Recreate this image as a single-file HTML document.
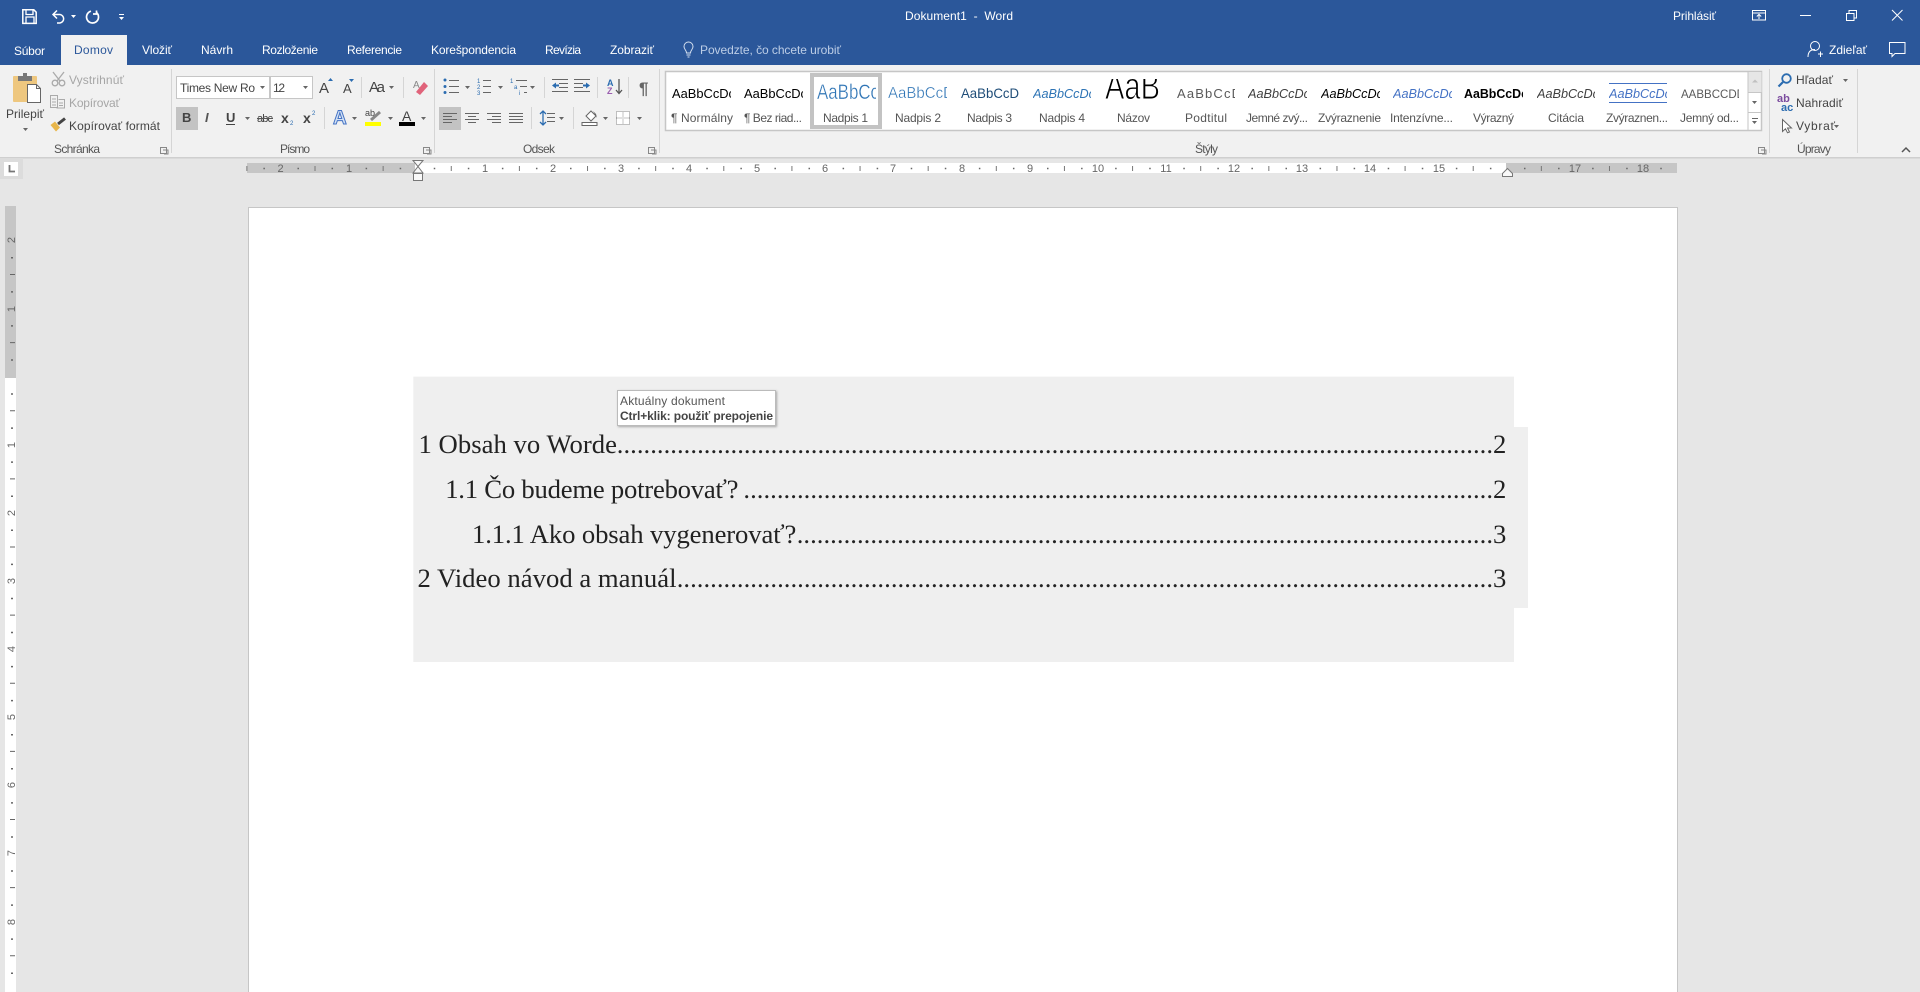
<!DOCTYPE html>
<html lang="sk"><head><meta charset="utf-8"><title>Dokument1 - Word</title>
<style>
html,body{margin:0;padding:0;width:1920px;height:992px;overflow:hidden;background:#e6e6e6}
svg{display:block}
svg text{font-family:"Liberation Sans",sans-serif;font-size:12px;fill:#444;white-space:pre}
.w text,text.w{fill:#fff}
.d{fill:#a6a6a6 !important}
.l{stroke:#666;stroke-width:1;fill:none}
.b{stroke:#2b6cb0;stroke-width:1.4;fill:none}
.r text{font-size:11px;fill:#666;text-anchor:middle}
.s text{font-size:13px;fill:#000}
.toc text{font-family:"Liberation Serif",serif;font-size:26.67px;fill:#222}
.lab text{font-size:12px;fill:#555}
.thin{stroke:#fff;stroke-width:.35px}
</style></head><body>
<svg width="1920" height="992" viewBox="0 0 1920 992" xmlns="http://www.w3.org/2000/svg">
<defs><path id="c" d="M0 0h5l-2.500 3z" fill="#666"/><path id="cw" d="M0 0h5l-2.500 3z" fill="#fff"/>
<g id="dl"><path d="M0.500 0.500h6v6h-6z M3 3h5v4h-4" fill="none" stroke="#888" stroke-width="1"/></g>
<filter id="sh" x="-5%" y="-10%" width="110%" height="125%"><feDropShadow dx="1" dy="1" stdDeviation="1" flood-color="#000" flood-opacity=".3"/></filter></defs>

<!-- top bar -->
<rect width="1920" height="65" fill="#2b579a"/>
<g fill="none" stroke="#fff" stroke-width="1.500">
<path d="M22.800 9.800h11l2.400 2.400v11.200h-13.400z"/><path d="M26 10v4.500h7V10M26 23v-6h8v6" stroke-width="1.300"/>
<path d="M53 14.500h7a4.300 4.300 0 0 1 0 8.500h-3M57 10.500l-4 4 4 4"/>
<path d="M91 11.200a6 6 0 1 0 5.500 1.300M96.500 10.500v3.500h-3.500" stroke-width="1.700"/>
<path d="M119 14.500h5" stroke-width="1"/>
</g>
<use href="#cw" x="71" y="15"/><use href="#cw" x="119" y="17"/>
<g class="w">
<text x="905" y="20" textLength="108">Dokument1  -  Word</text>
<text x="1673" y="20" textLength="43">Prihlásiť</text>
<text x="14" y="55" textLength="31">Súbor</text>
<text x="142" y="54" textLength="30">Vložiť</text>
<text x="201" y="54" textLength="32">Návrh</text>
<text x="262" y="54" textLength="56">Rozloženie</text>
<text x="347" y="54" textLength="55">Referencie</text>
<text x="431" y="54" textLength="85">Korešpondencia</text>
<text x="545" y="54" textLength="36">Revízia</text>
<text x="610" y="54" textLength="44">Zobraziť</text>
<text x="1829" y="54" textLength="38">Zdieľať</text>
</g>
<text x="700" y="54" textLength="141" style="fill:#bccde6">Povedzte, čo chcete urobiť</text>
<g fill="none" stroke="#fff" stroke-width="1">
<path d="M686.500 53c0-3-2.500-3.500-2.500-6.500a4.500 4.500 0 0 1 9 0c0 3-2.500 3.500-2.500 6.500zM686.500 55h4M687.500 57h2" stroke="#d5e0f0"/>
<path d="M1752.500 10.500h13v9.500h-13zM1752.500 13h13M1759 19v-4.500M1756.800 16.500l2.200-2.200 2.200 2.200"/>
<path d="M1800 15.500h11M1846.500 13.500h7.500v7h-7.500zM1849 13.500V10.500h7.500v7.500H1854"/>
<path d="M1892 10l10.500 10.500M1902.500 10L1892 20.500"/>
<circle cx="1815" cy="46" r="4.500"/><path d="M1808 57c0-5.500 3-7.500 7-7.500M1818 54h5M1820.500 51.500v5.500"/>
<path d="M1889.500 42.500h15.500v11h-10l-3 3v-3h-2.500z"/>
</g>

<!-- ribbon -->
<rect y="65" width="1920" height="92" fill="#f1f1f1"/>
<rect x="61" y="35" width="66" height="30" fill="#f1f1f1"/>
<text x="74" y="54" textLength="39" style="fill:#2b579a">Domov</text>
<rect y="157" width="1920" height="1.500" fill="#cfcfcf"/>
<g fill="#d5d5d5"><rect x="171" y="69" width="1" height="84"/><rect x="434" y="69" width="1" height="84"/><rect x="659" y="69" width="1" height="84"/><rect x="1769" y="69" width="1" height="84"/><rect x="1857" y="69" width="1" height="84"/>
<rect x="361" y="77" width="1" height="21"/><rect x="403" y="77" width="1" height="21"/><rect x="324" y="107" width="1" height="22"/>
<rect x="544" y="77" width="1" height="21"/><rect x="597" y="77" width="1" height="21"/><rect x="628" y="77" width="1" height="21"/><rect x="531" y="107" width="1" height="22"/><rect x="573" y="107" width="1" height="22"/></g>
<g class="lab">
<text x="54" y="153" textLength="46">Schránka</text>
<text x="280" y="153" textLength="30">Písmo</text>
<text x="523" y="153" textLength="32">Odsek</text>
<text x="1195" y="153" textLength="23">Štýly</text>
<text x="1797" y="153" textLength="34">Úpravy</text>
</g>
<use href="#dl" x="160" y="147"/><use href="#dl" x="423" y="147"/><use href="#dl" x="648" y="147"/><use href="#dl" x="1758" y="147"/>
<path d="M1902 152l4-4 4 4" fill="none" stroke="#555" stroke-width="1.500"/>

<!-- clipboard -->
<rect x="13" y="76" width="24" height="26" rx="1" fill="#eec77f"/>
<rect x="18" y="76" width="14" height="5" fill="#777"/><rect x="23" y="73" width="4" height="4" fill="#777"/>
<path d="M27.500 84.500h9l4 4v14h-13z" fill="#fff" stroke="#666"/><path d="M36.500 84.500v4h4" fill="none" stroke="#666"/>
<text x="6" y="118" textLength="38">Prilepiť</text><use href="#c" x="23" y="128"/>
<g fill="none" stroke="#aaa" stroke-width="1.300"><circle cx="55" cy="83" r="2.800"/><circle cx="62" cy="83" r="2.800"/><path d="M53 72l7 9M64 72l-7 9"/>
<path d="M50.500 95.500h7v12h-7zM58.500 99.500h6v8.500h-8M52 99h4M52 102h4M52 105h4M59 103h4M59 105.500h4" stroke-width="1"/></g>
<text x="69" y="84" textLength="55" class="d">Vystrihnúť</text>
<text x="69" y="107" textLength="51" class="d">Kopírovať</text>
<path d="M50.500 125l4.500-3.500 5 6-4 4z" fill="#e8b64a"/><path d="M58 124l7-5.500" stroke="#444" stroke-width="3"/>
<text x="69" y="130" textLength="91">Kopírovať formát</text>

<!-- font -->
<rect x="176.500" y="76.500" width="93" height="22" fill="#fff" stroke="#c6c6c6"/><rect x="270.500" y="76.500" width="42" height="22" fill="#fff" stroke="#c6c6c6"/>
<text x="180" y="92" textLength="75">Times New Ro</text><text x="273" y="92" textLength="12">12</text>
<use href="#c" x="260" y="86"/><use href="#c" x="303" y="86"/>
<text x="319" y="93" style="font-size:15px" textLength="11">A</text><path d="M328 81h5l-2.500-3z" fill="#2b6cb0"/>
<text x="343" y="93" style="font-size:13px" textLength="9">A</text><path d="M349 79h5l-2.500 3z" fill="#2b6cb0"/>
<text x="369" y="92" style="font-size:15px" textLength="16">Aa</text><use href="#c" x="389" y="86"/>
<text x="413" y="88" style="font-size:10px;fill:#888">A</text><path d="M416 92l8-10 4 4-8 9z" fill="#e0637a"/>
<rect x="176" y="107" width="22" height="23" fill="#c3c3c3"/>
<text x="182" y="122" style="font-size:13px;font-weight:bold;fill:#444">B</text>
<text x="205" y="122" style="font-size:13px;font-style:italic;font-weight:bold;fill:#555">I</text>
<text x="226" y="122" style="font-size:13px;font-weight:bold;fill:#444">U</text><rect x="226" y="124" width="9" height="1" fill="#444"/>
<use href="#c" x="245" y="117"/>
<text x="257" y="122" style="font-size:11px" textLength="16">abc</text><rect x="257" y="118" width="16" height="1" fill="#555"/>
<text x="281" y="123" style="font-size:14px;font-weight:bold">x</text><text x="290" y="125" style="font-size:6px;fill:#2b6cb0">2</text>
<text x="303" y="123" style="font-size:14px;font-weight:bold">x</text><text x="312" y="115" style="font-size:6px;fill:#2b6cb0">2</text>
<text x="333" y="124" style="font-size:19px;font-weight:bold;fill:#d3e2f5;stroke:#4472c4;stroke-width:1">A</text><use href="#c" x="352" y="117"/>
<text x="365" y="116" style="font-size:9px">ab</text><path d="M371 120l9-8" stroke="#888" stroke-width="3"/><rect x="365" y="122" width="16" height="4" fill="#ff0"/><use href="#c" x="388" y="117"/>
<text x="402" y="121" style="font-size:14px" textLength="10">A</text><rect x="399" y="122" width="16" height="4" fill="#000"/><use href="#c" x="421" y="117"/>

<!-- paragraph -->
<g fill="#2b6cb0"><circle cx="445" cy="80" r="1.500"/><circle cx="445" cy="86.500" r="1.500"/><circle cx="445" cy="92.500" r="1.500"/></g>
<path class="l" d="M449 80.500h10M449 86.500h10M449 92.500h10M483 80.500h8M483 86.500h8M483 92.500h8M516 80.500h11M520 86.500h7M524 92.500h3"/>
<g><text x="477" y="83" style="font-size:6px;fill:#2b6cb0">1</text><text x="477" y="89" style="font-size:6px;fill:#2b6cb0">2</text><text x="477" y="95" style="font-size:6px;fill:#2b6cb0">3</text>
<text x="510" y="83" style="font-size:6px;fill:#2b6cb0">1</text><text x="514" y="89" style="font-size:6px;fill:#2b6cb0">a</text><text x="519" y="95" style="font-size:6px;fill:#2b6cb0">i</text></g>
<use href="#c" x="465" y="86"/><use href="#c" x="498" y="86"/><use href="#c" x="530" y="86"/>
<path class="l" d="M552 79.500h16M559 83.500h9M559 87.500h9M552 91.500h16M574 79.500h16M574 91.500h16M574 83.500h9M574 87.500h9"/>
<path d="M552 85.500l4-3v2h3v2h-3v2zM590 85.500l-4-3v2h-3v2h3v2z" fill="#2b6cb0"/>
<text x="607" y="86" style="font-size:9px;font-weight:bold;fill:#2b6cb0">A</text><text x="607" y="94" style="font-size:9px;font-weight:bold;fill:#9b5fb0">Z</text>
<path d="M619 79v14M616 90l3 3.500 3-3.500" fill="none" stroke="#555" stroke-width="1.300"/>
<text x="639" y="94" style="font-size:17px;font-weight:bold;fill:#666">¶</text>
<rect x="439" y="107" width="22" height="23" fill="#c3c3c3"/>
<path class="l" d="M443 113.500h14M443 116.500h9M443 119.500h14M443 122.500h9M465 113.500h14M468 116.500h8M465 119.500h14M468 122.500h8M487 113.500h14M492 116.500h9M487 119.500h14M492 122.500h9M509 113.500h14M509 116.500h14M509 119.500h14M509 122.500h14"/>
<path d="M543 111v14M540 114l3-3 3 3M540 122l3 3 3-3" fill="none" stroke="#2b6cb0" stroke-width="1.300"/>
<path class="l" d="M547 113.500h8M547 117.500h8M547 121.500h8"/><use href="#c" x="559" y="117"/>
<path d="M586 116l5-5 5 5-5 5z" fill="#fff" stroke="#666"/><path d="M593 111l3 3 1 4z" fill="#666"/><rect x="582" y="122.500" width="15" height="3" fill="#fff" stroke="#666"/>
<use href="#c" x="603" y="117"/>
<rect x="616.500" y="111.500" width="13" height="13" fill="#fff" stroke="#888" stroke-dasharray="1 1"/><path d="M623 111.500v13M616.500 118h13" stroke="#888" stroke-dasharray="1 1"/>
<use href="#c" x="637" y="117"/>

<!-- styles gallery -->
<rect x="665.500" y="71.500" width="1096" height="59" fill="#fff" stroke="#c6c6c6" stroke-width="1.500"/>
<rect x="1748" y="72" width="13.500" height="20" fill="#e6e6e6"/>
<path d="M1748 72v58M1748 92.500h14M1748 112.500h14" stroke="#c6c6c6"/>
<path d="M1752 82.500l3-3 3 3z" fill="#c0c0c0"/><use href="#c" x="1752" y="101"/><path d="M1752 118.500h6" stroke="#666"/><use href="#c" x="1752" y="121"/>
<rect x="812" y="75" width="68" height="52" fill="none" stroke="#c3c3c3" stroke-width="4"/>
<g class="s">
<svg x="672" y="75" width="59" height="35"><text x="0" y="23" textLength="63" lengthAdjust="spacingAndGlyphs">AaBbCcDc</text></svg>
<svg x="744" y="75" width="59" height="35"><text x="0" y="23" textLength="63" lengthAdjust="spacingAndGlyphs">AaBbCcDc</text></svg>
<svg x="817" y="75" width="59" height="35"><text x="0" y="24" class="thin" style="font-size:21px;fill:#2e74b5" textLength="62" lengthAdjust="spacingAndGlyphs">AaBbCc</text></svg>
<svg x="888" y="75" width="59" height="35"><text x="0" y="23" class="thin" style="font-size:16px;fill:#2e74b5" textLength="66" lengthAdjust="spacingAndGlyphs">AaBbCcD</text></svg>
<svg x="961" y="75" width="59" height="35"><text x="0" y="23" style="font-size:14px;fill:#1f4d78" textLength="58" lengthAdjust="spacingAndGlyphs">AaBbCcD</text></svg>
<svg x="1033" y="75" width="58" height="35"><text x="0" y="23" style="font-style:italic;fill:#2e74b5" textLength="62" lengthAdjust="spacingAndGlyphs">AaBbCcDc</text></svg>
<svg x="1100" y="79" width="70" height="35"><text x="5" y="20" class="thin" style="font-size:38px;fill:#000;stroke-width:1px" textLength="55" lengthAdjust="spacingAndGlyphs">AaB</text></svg>
<svg x="1177" y="75" width="58" height="35"><text x="0" y="23" style="fill:#5a5a5a" textLength="64">AaBbCcD</text></svg>
<svg x="1248" y="75" width="59" height="35"><text x="0" y="23" style="font-style:italic;fill:#404040" textLength="62" lengthAdjust="spacingAndGlyphs">AaBbCcDc</text></svg>
<svg x="1321" y="75" width="59" height="35"><text x="0" y="23" style="font-style:italic" textLength="62" lengthAdjust="spacingAndGlyphs">AaBbCcDc</text></svg>
<svg x="1393" y="75" width="59" height="35"><text x="0" y="23" style="font-style:italic;fill:#4472c4" textLength="62" lengthAdjust="spacingAndGlyphs">AaBbCcDc</text></svg>
<svg x="1464" y="75" width="59" height="35"><text x="0" y="23" style="font-weight:bold" textLength="64" lengthAdjust="spacingAndGlyphs">AaBbCcDc</text></svg>
<svg x="1537" y="75" width="58" height="35"><text x="0" y="23" style="font-style:italic;fill:#404040" textLength="62" lengthAdjust="spacingAndGlyphs">AaBbCcDc</text></svg>
<svg x="1609" y="75" width="58" height="35"><text x="0" y="23" style="font-style:italic;fill:#4472c4" textLength="62" lengthAdjust="spacingAndGlyphs">AaBbCcDc</text></svg>
<svg x="1681" y="75" width="58" height="35"><text x="0" y="23" style="font-size:12px;fill:#5a5a5a" textLength="64" lengthAdjust="spacingAndGlyphs">AABBCCDD</text></svg>
</g>
<path d="M1609 83.500h58M1609 102.500h58" stroke="#4472c4"/>
<g class="lab">
<text x="671" y="122" textLength="62">¶ Normálny</text>
<text x="744" y="122" textLength="58">¶ Bez riad...</text>
<text x="823" y="122" textLength="45">Nadpis 1</text>
<text x="895" y="122" textLength="46">Nadpis 2</text>
<text x="967" y="122" textLength="45">Nadpis 3</text>
<text x="1039" y="122" textLength="46">Nadpis 4</text>
<text x="1117" y="122" textLength="33">Názov</text>
<text x="1185" y="122" textLength="42">Podtitul</text>
<text x="1246" y="122" textLength="62">Jemné zvý...</text>
<text x="1318" y="122" textLength="63">Zvýraznenie</text>
<text x="1390" y="122" textLength="63">Intenzívne...</text>
<text x="1473" y="122" textLength="41">Výrazný</text>
<text x="1548" y="122" textLength="36">Citácia</text>
<text x="1606" y="122" textLength="62">Zvýraznen...</text>
<text x="1680" y="122" textLength="59">Jemný od...</text>
</g>

<!-- editing -->
<circle cx="1786.500" cy="78.500" r="4.300" fill="none" stroke="#2b6cb0" stroke-width="1.800"/><path d="M1783 82l-4.500 4.500" stroke="#2b6cb0" stroke-width="2.200"/>
<text x="1796" y="84" textLength="37">Hľadať</text><use href="#c" x="1843" y="79"/>
<text x="1777" y="102" style="font-size:11px;font-weight:bold;fill:#7b4b9e">ab</text><text x="1781" y="111" style="font-size:11px;font-weight:bold;fill:#2b6cb0">ac</text>
<text x="1796" y="107" textLength="47">Nahradiť</text>
<path d="M1782.500 119.500l9 8.500h-4l2 4-2 .8-2-4-3 2.700z" fill="#fff" stroke="#666"/>
<text x="1796" y="130" textLength="39">Vybrať</text><use href="#c" x="1834" y="125"/>

<!-- rulers -->
<rect x="0" y="158" width="23" height="21" fill="#dcdcdc"/><rect x="4" y="162" width="14" height="14" fill="#fff"/><path d="M9.500 165v6.500h5.500" fill="none" stroke="#777" stroke-width="1.800"/>
<rect x="247" y="163" width="1430" height="10" fill="#c6c6c6"/><rect x="415" y="163" width="1091" height="10" fill="#fff"/>
<line x1="246.380" x2="1677" y1="168.500" y2="168.500" stroke="#777" stroke-width="5" stroke-dasharray="1 67.13"/>
<line x1="263.400" x2="1677" y1="168.500" y2="168.500" stroke="#666" stroke-width="1.500" stroke-dasharray="1.500 32.570"/>
<g class="r">
<rect x="275" y="164" width="11" height="8" fill="#c6c6c6"/><text x="280.500" y="172">2</text>
<rect x="344" y="164" width="11" height="8" fill="#c6c6c6"/><text x="349" y="172">1</text>
<text x="485" y="172">1</text><text x="553" y="172">2</text><text x="621" y="172">3</text><text x="689" y="172">4</text><text x="757" y="172">5</text><text x="825" y="172">6</text><text x="893" y="172">7</text><text x="962" y="172">8</text><text x="1030" y="172">9</text><text x="1098" y="172">10</text><text x="1166" y="172">11</text><text x="1234" y="172">12</text><text x="1302" y="172">13</text><text x="1370" y="172">14</text><text x="1439" y="172">15</text><text x="1575" y="172">17</text><text x="1643" y="172">18</text>
</g>
<path d="M413 160.500h10l-5 6 5 6.500h-10l5-6.500z" fill="#f8f8f8" stroke="#777"/><rect x="413.500" y="173.500" width="9" height="7" fill="#f8f8f8" stroke="#777"/>
<path d="M1507.500 168.500l5 5v3h-10v-3z" fill="#f8f8f8" stroke="#777"/>
<rect x="5" y="206" width="11" height="172" fill="#c6c6c6"/><rect x="5" y="378" width="11" height="614" fill="#fff"/>
<line x1="12.500" x2="12.500" y1="274" y2="992" stroke="#666" stroke-width="5" stroke-dasharray="1 67.13"/>
<line x1="12" x2="12" y1="257" y2="992" stroke="#666" stroke-width="2" stroke-dasharray="1.500 32.570"/>
<g class="r">
<rect x="6" y="305" width="9" height="9" fill="#c6c6c6"/>
<text transform="translate(15 240) rotate(-90)" x="0" y="0">2</text>
<text transform="translate(15 309) rotate(-90)" x="0" y="0">1</text>
<text transform="translate(15 445) rotate(-90)" x="0" y="0">1</text>
<text transform="translate(15 513) rotate(-90)" x="0" y="0">2</text>
<text transform="translate(15 581) rotate(-90)" x="0" y="0">3</text>
<text transform="translate(15 649) rotate(-90)" x="0" y="0">4</text>
<text transform="translate(15 717) rotate(-90)" x="0" y="0">5</text>
<text transform="translate(15 785) rotate(-90)" x="0" y="0">6</text>
<text transform="translate(15 853) rotate(-90)" x="0" y="0">7</text>
<text transform="translate(15 922) rotate(-90)" x="0" y="0">8</text>
</g>

<!-- page -->
<rect x="248.500" y="207.500" width="1429" height="800" fill="#fff" stroke="#c6c6c6"/>
<path d="M413.300 376.600H1514V427h14v181h-14v54H413.300z" fill="#efefef"/>
<g class="toc">
<text x="418.500" y="453" textLength="198.500">1 Obsah vo Worde</text>
<text x="616.800" y="453" textLength="876.200">...................................................................................................................................</text>
<text x="1493" y="453">2</text>
<text x="445.200" y="498" textLength="293.300">1.1 Čo budeme potrebovať?</text>
<text x="743.400" y="498" textLength="749.600">................................................................................................................</text>
<text x="1493" y="498">2</text>
<text x="472" y="543" textLength="324.300">1.1.1 Ako obsah vygenerovať?</text>
<text x="796.700" y="543" textLength="696.300">........................................................................................................</text>
<text x="1493" y="543">3</text>
<text x="417.500" y="587" textLength="259">2 Video návod a manuál</text>
<text x="676.700" y="587" textLength="816.300">..........................................................................................................................</text>
<text x="1493" y="587">3</text>
</g>
<rect x="617.500" y="390.500" width="158" height="35" fill="#fff" stroke="#bbb" filter="url(#sh)"/>
<text x="620" y="405" textLength="105" style="fill:#555">Aktuálny dokument</text>
<text x="620" y="420" textLength="153" style="font-weight:bold;fill:#444">Ctrl+klik: použiť prepojenie</text>
</svg>
</body></html>
